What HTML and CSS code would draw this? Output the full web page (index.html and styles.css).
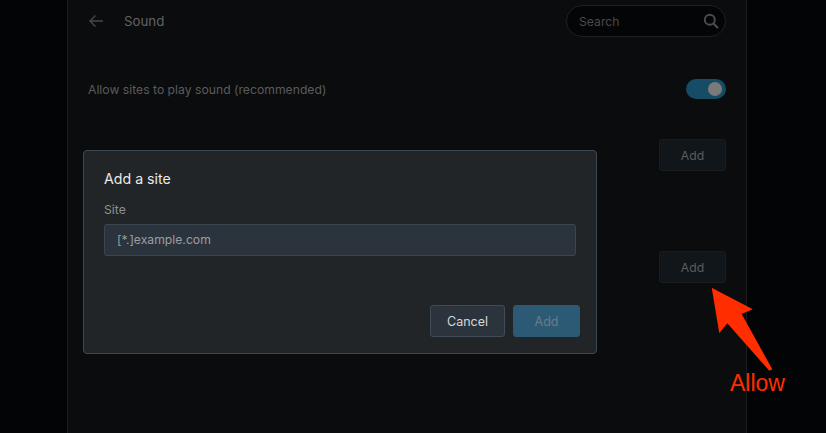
FILE: index.html
```html
<!DOCTYPE html>
<html lang="en">
<head>
<meta charset="utf-8">
<title>Sound</title>
<link rel="stylesheet" href="styles.css">
</head>
<body>
<main class="panel">
  <header class="head">
    <svg class="back" width="16" height="14" viewBox="0 0 16 14" aria-hidden="true"><path d="M15 7H2M7.5 1.5 2 7l5.5 5.5" fill="none" stroke="currentColor" stroke-width="1.4"/></svg>
    <h1 class="title">Sound</h1>
    <div class="search">
      <span class="search-text">Search</span>
      <svg class="search-icon" width="16" height="16" viewBox="0 0 16 16" aria-hidden="true"><circle cx="6.8" cy="6.8" r="5" fill="none" stroke="currentColor" stroke-width="2"/><path d="M10.5 10.5 15 15" stroke="currentColor" stroke-width="2.2" fill="none"/></svg>
    </div>
  </header>
  <div class="row-toggle">
    <span class="row-label">Allow sites to play sound (recommended)</span>
    <span class="toggle"><span class="knob"></span></span>
  </div>
  <div class="row-add first"><span class="row-label">Block</span><button class="add-btn">Add</button></div>
  <div class="row-add second"><span class="row-label">Allow</span><button class="add-btn">Add</button></div>
</main>

<section class="dialog">
  <h2 class="dialog-title">Add a site</h2>
  <label class="field-label">Site</label>
  <div class="field">[*.]example.com</div>
  <div class="actions">
    <button class="btn cancel">Cancel</button>
    <button class="btn primary">Add</button>
  </div>
</section>

<svg class="arrow" width="70" height="90" viewBox="0 0 70 90" aria-hidden="true"><path d="M1.7 .7 42.7 22.3 31.7 27 62.3 82.3 59.3 83.7 17.3 36.3 9.3 46.3Z" fill="#ff2d00"/></svg>
<span class="allow">Allow</span>
</body>
</html>
```
FILE: styles.css
```css
* { box-sizing: border-box; }
html, body { height: 100%; }
body {
  margin: 0;
  height: 433px;
  overflow: hidden;
  background: #030405;
  font-family: Inter, "Liberation Sans", sans-serif;
  position: relative;
}
.panel {
  width: 680px;
  height: 433px;
  margin-left: 67px;
  padding: 0 20px;
  background: #0a0c0e;
  border-left: 1px solid #1b1d1f;
  border-right: 1px solid #1b1d1f;
  display: flex;
  flex-direction: column;
}
.head {
  height: 42px;
  display: flex;
  align-items: center;
  flex-shrink: 0;
}
.back { color: #47484a; margin-right: 20px; flex-shrink: 0; }
.title {
  margin: 0;
  font-size: 13.3px;
  font-weight: 400;
  color: #626365;
  flex: 1;
}
.search {
  width: 160px;
  height: 32px;
  border: 1px solid #1e2022;
  border-radius: 16px;
  background: #040506;
  display: flex;
  align-items: center;
  justify-content: space-between;
  padding: 0 6px 0 12px;
}
.search-text { font-size: 12.2px; color: #4a4b4d; }
.search-icon { color: #4a4b4d; }
.row-toggle {
  margin-top: 37px;
  height: 20px;
  display: flex;
  align-items: center;
  justify-content: space-between;
}
.row-label { font-size: 12.2px; color: #5a5b5d; }
.toggle {
  width: 40px;
  height: 20px;
  border-radius: 10px;
  background: #174c66;
  display: flex;
  align-items: center;
  justify-content: flex-end;
  padding-right: 4px;
}
.knob { width: 14px; height: 14px; border-radius: 50%; background: #7a7a7a; }
.row-add { display: flex; justify-content: space-between; align-items: center; }
.row-add.first { margin-top: 40px; }
.row-add.second { margin-top: 80px; }
.add-btn {
  width: 67px;
  height: 32px;
  padding: 0;
  border: 1px solid #191d20;
  border-radius: 3px;
  background: #11161a;
  color: #5b5d5f;
  font: 400 12.2px Inter, "Liberation Sans", sans-serif;
}
.dialog {
  position: absolute;
  left: 83px;
  top: 150px;
  width: 514px;
  height: 204px;
  padding: 19px 16px 16px 20px;
  background: #212528;
  border: 1px solid #3d4852;
  border-radius: 4px;
  display: flex;
  flex-direction: column;
}
.dialog-title {
  margin: 0;
  font-size: 14.2px;
  font-weight: 400;
  line-height: 17px;
  color: #e8e9ea;
}
.field-label {
  margin-top: 15px;
  font-size: 12.2px;
  line-height: 15px;
  color: #8e9193;
}
.field {
  margin-top: 7px;
  width: 472px;
  height: 32px;
  padding: 0 12px;
  background: #2b343d;
  border: 1px solid #3c4650;
  border-radius: 3px;
  font-size: 12.2px;
  line-height: 30px;
  color: #9b9ea1;
}
.actions {
  margin-top: auto;
  display: flex;
  justify-content: flex-end;
  gap: 8px;
}
.btn {
  height: 32px;
  padding: 0;
  border-radius: 3px;
  font: 400 12.5px Inter, "Liberation Sans", sans-serif;
}
.cancel {
  width: 75px;
  background: #2b343d;
  border: 1px solid #414b55;
  color: #d5d7d9;
}
.primary {
  width: 67px;
  background: #2c5a75;
  border: 1px solid #2c5a75;
  color: #667d8b;
}
.arrow { position: absolute; left: 710px; top: 287px; }
.allow {
  position: absolute;
  left: 730px;
  top: 370px;
  font-family: "Liberation Sans", Arial, sans-serif;
  font-size: 23px;
  line-height: 26px;
  color: #ff2d00;
}
```
